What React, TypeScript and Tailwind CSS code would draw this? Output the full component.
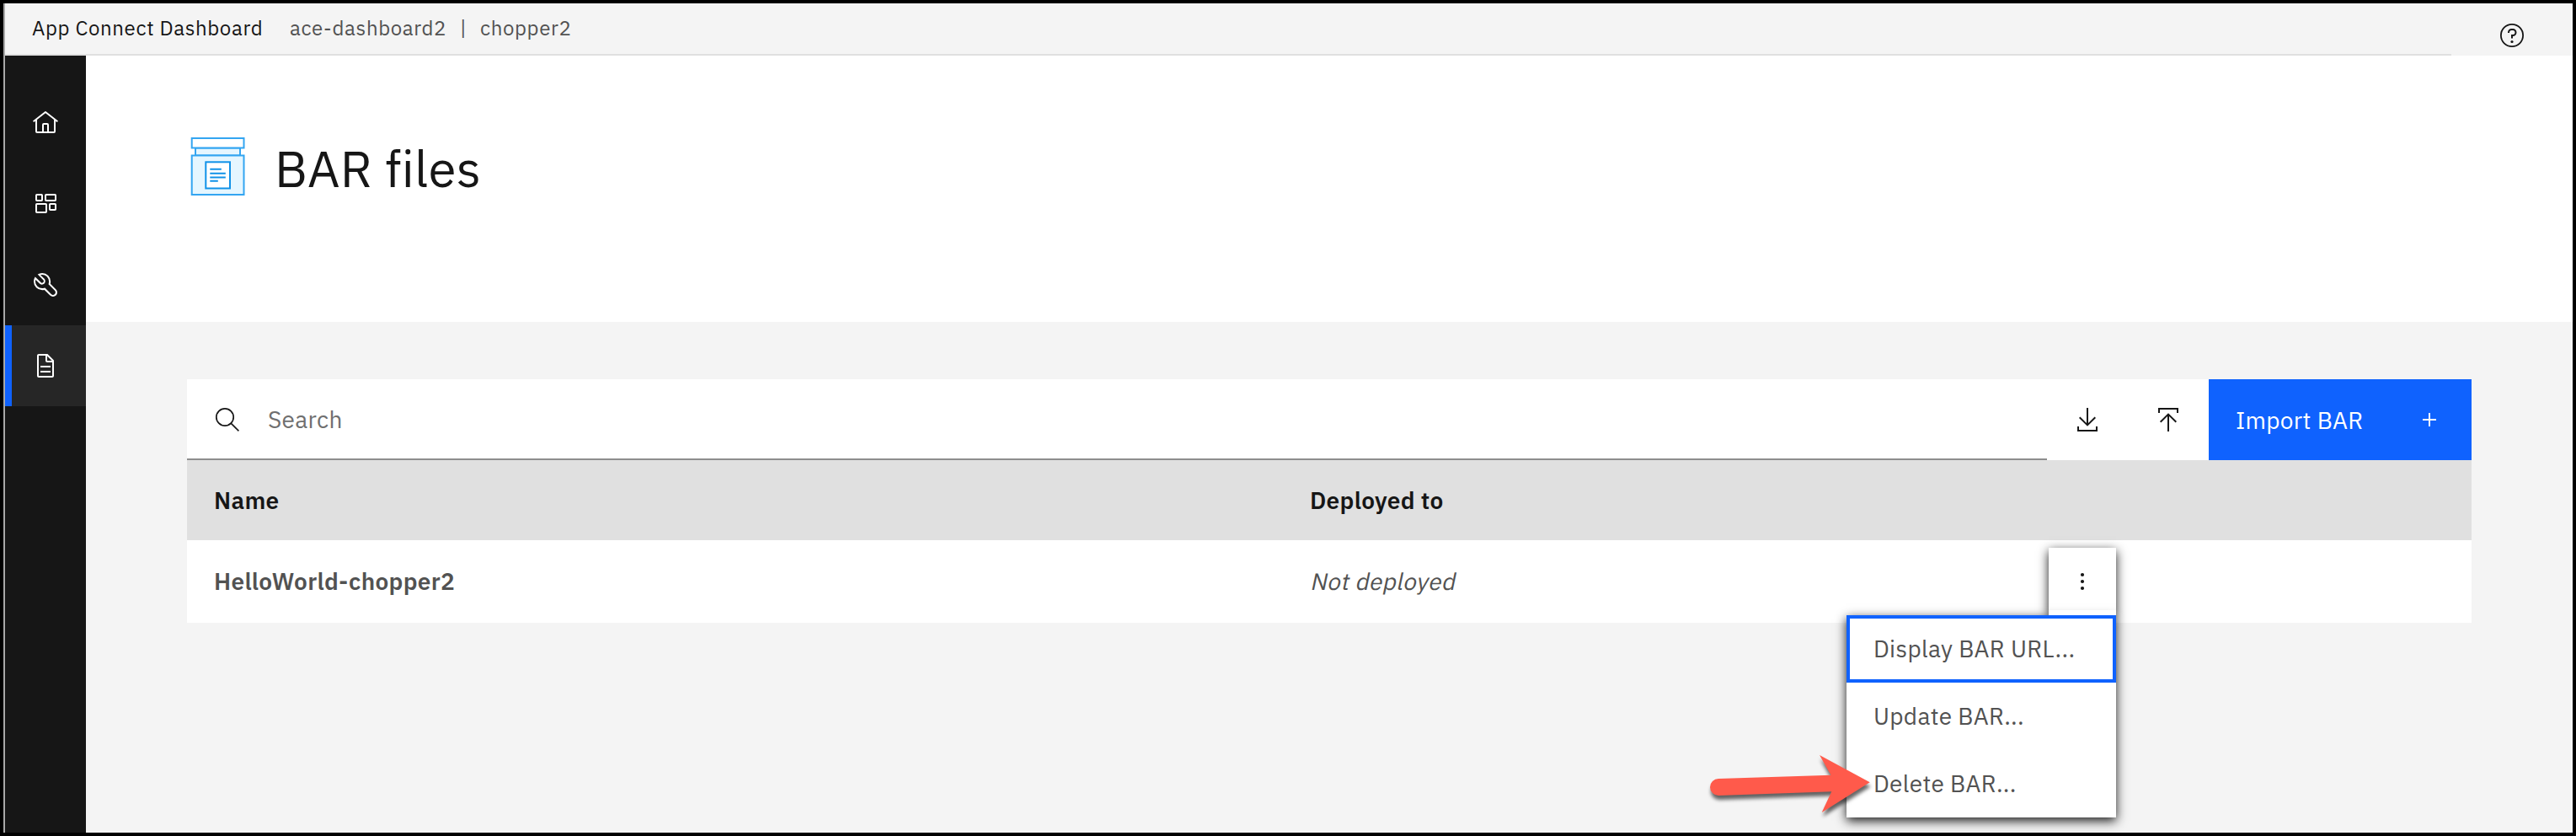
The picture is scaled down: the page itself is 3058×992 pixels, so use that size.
import React from 'react';

const T = ({ children, className = '' }: { children: React.ReactNode; className?: string }) => (
  <span className={`block whitespace-nowrap ${className}`}>{children}</span>
);

const HomeIcon = () => (
  <svg width="32" height="32" viewBox="0 0 32 32" fill="#fff">
    <path d="M16.6123,2.2138a1.01,1.01,0,0,0-1.2427,0L1,13.4194l1.2427,1.5717L4,13.6209V26a2.0041,2.0041,0,0,0,2,2H26a2.0037,2.0037,0,0,0,2-2V13.63L29.7573,15,31,13.4282ZM18,26H14V18h4Zm2,0V18a2.0023,2.0023,0,0,0-2-2H14a2.002,2.002,0,0,0-2,2v8H6V12.0615l10-7.79,10,7.8005V26Z" />
  </svg>
);

const DashboardIcon = () => (
  <svg width="32" height="32" viewBox="0 0 32 32" fill="none" stroke="#fff" strokeWidth="2">
    <rect x="5" y="5" width="7" height="7" rx="0.8" />
    <rect x="16" y="5" width="12" height="7" rx="0.8" />
    <rect x="5" y="16" width="12" height="10" rx="0.8" />
    <rect x="21" y="16" width="7" height="7" rx="0.8" />
  </svg>
);

const ToolsIcon = () => (
  <svg width="32" height="32" viewBox="0 0 32 32" fill="#fff">
    <path d="M12.1,2a9.8,9.8,0,0,0-5.4,1.6l6.4,6.4a2.1,2.1,0,0,1,.2,3,2.1,2.1,0,0,1-3-.2L3.7,6.4A9.84,9.84,0,0,0,2,12.1,10.14,10.14,0,0,0,12.1,22.2a10.9,10.9,0,0,0,2.6-.3l6.7,6.7a5,5,0,0,0,7.1-7.1l-6.7-6.7a10.9,10.9,0,0,0,.3-2.6A10,10,0,0,0,12.1,2Zm8,10.1a7.61,7.61,0,0,1-.3,2.1l-.3,1.1.8.8,6.7,6.7a2.88,2.88,0,0,1,.9,2.1A2.72,2.72,0,0,1,27,27a2.9,2.9,0,0,1-4.2,0l-6.7-6.7-.8-.8-1.1.3a7.61,7.61,0,0,1-2.1.3,8.27,8.27,0,0,1-5.7-2.3A7.63,7.63,0,0,1,4,12.1a8.33,8.33,0,0,1,.3-2.2l4.4,4.4a4.14,4.14,0,0,0,5.9.2,4.14,4.14,0,0,0-.2-5.9L10,4.2a6.45,6.45,0,0,1,2-.3,8.27,8.27,0,0,1,5.7,2.3A8.49,8.49,0,0,1,20.1,12.1Z" />
  </svg>
);

const DocumentIcon = () => (
  <svg width="32" height="32" viewBox="0 0 32 32" fill="#fff">
    <path d="M25.7,9.3l-7-7C18.5,2.1,18.3,2,18,2H8C6.9,2,6,2.9,6,4v24c0,1.1,0.9,2,2,2h16c1.1,0,2-0.9,2-2V10C26,9.7,25.9,9.5,25.7,9.3z M18,4.4l5.6,5.6H18V4.4z M24,28H8V4h8v6c0,1.1,0.9,2,2,2h6V28z" />
    <rect x="10" y="22" width="12" height="2" />
    <rect x="10" y="16" width="12" height="2" />
  </svg>
);

const HelpIcon = () => (
  <svg width="32" height="32" viewBox="0 0 32 32" fill="#161616">
    <circle cx="16" cy="16" r="13.1" fill="none" stroke="#161616" strokeWidth="1.8" />
    <path d="M17 8h-1.500A4.490 4.490 0 0 0 11 12.500V13h2v-.5A2.500 2.500 0 0 1 15.500 10H17a2.500 2.500 0 0 1 0 5H15v4.500h2V17a4.500 4.500 0 0 0 0-9Z" />
    <circle cx="16" cy="23.500" r="1.600" />
  </svg>
);

const SearchIcon = () => (
  <svg width="32" height="32" viewBox="0 0 32 32" fill="none" stroke="#161616" strokeWidth="1.7">
    <circle cx="13" cy="13" r="10.200" />
    <path d="M20.300 20.300l9.100 9.100" />
  </svg>
);

const DownloadIcon = () => (
  <svg width="32" height="32" viewBox="0 0 32 32" fill="none" stroke="#161616" strokeWidth="2">
    <path d="M16 2v20M6.700 13.200l9.300 9.200 9.300-9.200M5 24v5h22v-5" />
  </svg>
);

const UploadIcon = () => (
  <svg width="32" height="32" viewBox="0 0 32 32" fill="none" stroke="#161616" strokeWidth="2">
    <path d="M16 30V10M6.700 18.800l9.300-9.200 9.300 9.200M5 8V3h22v5" />
  </svg>
);

const JarIcon = () => (
  <svg width="72" height="76" viewBox="0 0 72 76" fill="#e5f6ff" stroke="#33a5f1" strokeWidth="2">
    <rect x="10" y="13.500" width="53" height="9" />
    <rect x="5.700" y="2" width="61.800" height="11.500" fill="#fff" />
    <rect x="5.700" y="22.500" width="61.800" height="46.500" />
    <rect x="22.300" y="30.300" width="28.700" height="31.200" fill="#fff" stroke="#1192e8" />
    <path d="M27.300 38.700h13.500M27.300 43.700h18.500M27.300 48.600h18.500M27.300 52.700h9.500" stroke="#1192e8" />
  </svg>
);

const Arrow = () => (
  <svg width="240" height="112" viewBox="0 0 240 112" className="pointer-events-none absolute left-[2006px] top-[876px] overflow-visible drop-shadow-[1px_5px_2px_rgba(0,0,0,0.6)]">
    <path d="M30 44L163.500 39.700L150 16L209.700 48.300L152.700 84L164.300 59.300L30 64A10 10 0 0 1 30 44Z" fill="#ff5a4b" />
  </svg>
);

const navItems = [
  { id: 'home', icon: <HomeIcon /> },
  { id: 'dashboard', icon: <DashboardIcon /> },
  { id: 'tools', icon: <ToolsIcon /> },
  { id: 'files', icon: <DocumentIcon />, active: true },
];

export default function App() {
  return (
    <div className="relative flex h-[992px] w-[3058px] overflow-hidden border-4 border-black bg-[#f4f4f4] font-['IBM_Plex_Sans',Roboto,sans-serif] text-[28px] leading-[36px] tracking-[0.320px] text-[#525252]">
      <div className="w-[2px] shrink-0 bg-[#a8a8a8]" />
      <div className="flex min-w-0 flex-1 flex-col">
        <header className="flex h-[62px] shrink-0 text-[24px] leading-[30px] tracking-[0.640px]">
          <div className="flex w-[2904px] border-b-2 border-[#e0e0e0] pl-[32px] pt-[14px]">
            <T className="w-[306px] text-[#161616]">App Connect Dashboard</T>
            <T className="w-[202px]">ace-dashboard2</T>
            <T className="w-[24px]">|</T>
            <T>chopper2</T>
          </div>
          <div className="pl-[56px] pt-[22px]">
            <HelpIcon />
          </div>
        </header>
        <div className="flex min-h-0 flex-1">
          <nav className="w-[96px] shrink-0 bg-[#161616] pt-[32px]">
            {navItems.map((item) => (
              <div
                key={item.id}
                className={
                  item.active
                    ? 'flex h-[96px] items-center border-l-8 border-[#0f62fe] bg-[#262626] pl-[24px]'
                    : 'flex h-[96px] items-center pl-[32px]'
                }
              >
                {item.icon}
              </div>
            ))}
          </nav>
          <main className="min-w-0 flex-1">
            <div className="flex h-[316px] bg-white pl-[120px] pt-[96px]">
              <JarIcon />
              <h1 className="ml-[32px] mt-[2px] whitespace-nowrap text-[60px] leading-[72px] tracking-[0.320px] text-[#161616]">BAR files</h1>
            </div>
            <section className="ml-[120px] mt-[68px] w-[2712px]">
              <div className="flex h-[96px] bg-white">
                <div className="flex w-[2208px] border-b-2 border-[#8d8d8d] pl-[32px] pt-[32px]">
                  <SearchIcon />
                  <T className="ml-[32px] mt-[-2px] text-[#6f6f6f]">Search</T>
                </div>
                <div className="flex w-[96px] items-center justify-center"><DownloadIcon /></div>
                <div className="flex w-[96px] items-center justify-center"><UploadIcon /></div>
                <div className="flex w-[312px] justify-between bg-[#0f62fe] pl-[32px] pr-[42px] pt-[31px] text-white">
                  <T>Import BAR</T>
                  <svg width="16" height="16" viewBox="0 0 16 16" className="mt-[9px]" stroke="#fff" strokeWidth="2">
                    <path d="M8 0v16M0 8h16" />
                  </svg>
                </div>
              </div>
              <div className="flex h-[95px] bg-[#e0e0e0] pl-[32px] pt-[30px] font-semibold text-[#161616]">
                <T className="w-[1301px]">Name</T>
                <T>Deployed to</T>
              </div>
              <div className="flex h-[98px] bg-white pl-[32px] pt-[31px]">
                <T className="w-[1301px] font-semibold">HelloWorld-chopper2</T>
                <T className="origin-[0_28px] -skew-x-[12deg]">Not deployed</T>
              </div>
            </section>
          </main>
        </div>
      </div>

      <div className="absolute left-[2428px] top-[646px] flex h-[80px] w-[80px] items-center justify-center bg-white shadow-[0_4px_12px_rgba(0,0,0,0.9)]">
        <svg width="8" height="24" viewBox="0 0 8 24" fill="#161616">
          <circle cx="4" cy="4" r="2.100" />
          <circle cx="4" cy="12" r="2.100" />
          <circle cx="4" cy="20" r="2.100" />
        </svg>
      </div>
      <div className="absolute left-[2188px] top-[726px] h-[240px] w-[320px] bg-white shadow-[0_4px_12px_rgba(0,0,0,0.9)]">
        <div className="h-[80px] border-4 border-[#0f62fe] pl-[28px] pt-[18px]"><T>Display BAR URL...</T></div>
        <div className="h-[80px] pl-[32px] pt-[22px]"><T>Update BAR...</T></div>
        <div className="h-[80px] pl-[32px] pt-[22px]"><T>Delete BAR...</T></div>
      </div>
      <div className="absolute left-[2428px] top-[720px] h-[6px] w-[80px] bg-white" />
      <Arrow />
    </div>
  );
}
